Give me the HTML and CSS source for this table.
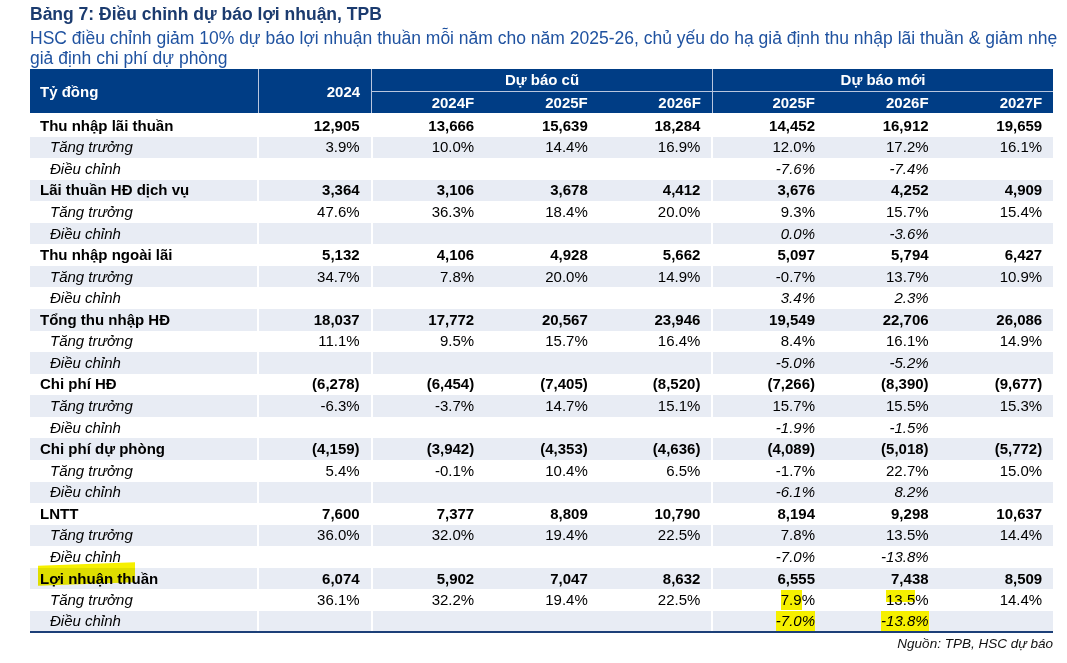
FILE: index.html
```html
<!DOCTYPE html>
<html lang="vi">
<head>
<meta charset="utf-8">
<title>Bảng 7</title>
<link rel="stylesheet" href="styles.css">
</head>
<body>
<div class="page">
  <h1 class="title">Bảng 7: Điều chỉnh dự báo lợi nhuận, TPB</h1>
  <p class="subtitle">HSC điều chỉnh giảm 10% dự báo lợi nhuận thuần mỗi năm cho năm 2025-26, chủ yếu do hạ giả định thu nhập lãi thuần &amp; giảm nhẹ giả định chi phí dự phòng</p>
  <table class="tbl">
    <colgroup>
      <col class="c-label"><col class="c-num"><col class="c-num"><col class="c-num"><col class="c-num"><col class="c-num"><col class="c-num"><col class="c-num">
    </colgroup>
    <thead>
      <tr class="h1">
        <th rowspan="2" class="hl sep">Tỷ đồng</th>
        <th rowspan="2" class="sep">2024</th>
        <th colspan="3" class="grp sep">Dự báo cũ</th>
        <th colspan="3" class="grp">Dự báo mới</th>
      </tr>
      <tr class="h2">
        <th>2024F</th><th>2025F</th><th class="sep">2026F</th>
        <th>2025F</th><th>2026F</th><th>2027F</th>
      </tr>
    </thead>
    <tbody>
      <tr class="main first"><td>Thu nhập lãi thuần</td><td>12,905</td><td>13,666</td><td>15,639</td><td>18,284</td><td>14,452</td><td>16,912</td><td>19,659</td></tr>
      <tr class="sub"><td>Tăng trưởng</td><td>3.9%</td><td>10.0%</td><td>14.4%</td><td>16.9%</td><td>12.0%</td><td>17.2%</td><td>16.1%</td></tr>
      <tr class="adj"><td>Điều chỉnh</td><td></td><td></td><td></td><td></td><td>-7.6%</td><td>-7.4%</td><td></td></tr>

      <tr class="main"><td>Lãi thuần HĐ dịch vụ</td><td>3,364</td><td>3,106</td><td>3,678</td><td>4,412</td><td>3,676</td><td>4,252</td><td>4,909</td></tr>
      <tr class="sub"><td>Tăng trưởng</td><td>47.6%</td><td>36.3%</td><td>18.4%</td><td>20.0%</td><td>9.3%</td><td>15.7%</td><td>15.4%</td></tr>
      <tr class="adj"><td>Điều chỉnh</td><td></td><td></td><td></td><td></td><td>0.0%</td><td>-3.6%</td><td></td></tr>

      <tr class="main"><td>Thu nhập ngoài lãi</td><td>5,132</td><td>4,106</td><td>4,928</td><td>5,662</td><td>5,097</td><td>5,794</td><td>6,427</td></tr>
      <tr class="sub"><td>Tăng trưởng</td><td>34.7%</td><td>7.8%</td><td>20.0%</td><td>14.9%</td><td>-0.7%</td><td>13.7%</td><td>10.9%</td></tr>
      <tr class="adj"><td>Điều chỉnh</td><td></td><td></td><td></td><td></td><td>3.4%</td><td>2.3%</td><td></td></tr>

      <tr class="main"><td>Tổng thu nhập HĐ</td><td>18,037</td><td>17,772</td><td>20,567</td><td>23,946</td><td>19,549</td><td>22,706</td><td>26,086</td></tr>
      <tr class="sub"><td>Tăng trưởng</td><td>11.1%</td><td>9.5%</td><td>15.7%</td><td>16.4%</td><td>8.4%</td><td>16.1%</td><td>14.9%</td></tr>
      <tr class="adj"><td>Điều chỉnh</td><td></td><td></td><td></td><td></td><td>-5.0%</td><td>-5.2%</td><td></td></tr>

      <tr class="main"><td>Chi phí HĐ</td><td>(6,278)</td><td>(6,454)</td><td>(7,405)</td><td>(8,520)</td><td>(7,266)</td><td>(8,390)</td><td>(9,677)</td></tr>
      <tr class="sub"><td>Tăng trưởng</td><td>-6.3%</td><td>-3.7%</td><td>14.7%</td><td>15.1%</td><td>15.7%</td><td>15.5%</td><td>15.3%</td></tr>
      <tr class="adj"><td>Điều chỉnh</td><td></td><td></td><td></td><td></td><td>-1.9%</td><td>-1.5%</td><td></td></tr>

      <tr class="main"><td>Chi phí dự phòng</td><td>(4,159)</td><td>(3,942)</td><td>(4,353)</td><td>(4,636)</td><td>(4,089)</td><td>(5,018)</td><td>(5,772)</td></tr>
      <tr class="sub"><td>Tăng trưởng</td><td>5.4%</td><td>-0.1%</td><td>10.4%</td><td>6.5%</td><td>-1.7%</td><td>22.7%</td><td>15.0%</td></tr>
      <tr class="adj"><td>Điều chỉnh</td><td></td><td></td><td></td><td></td><td>-6.1%</td><td>8.2%</td><td></td></tr>

      <tr class="main"><td>LNTT</td><td>7,600</td><td>7,377</td><td>8,809</td><td>10,790</td><td>8,194</td><td>9,298</td><td>10,637</td></tr>
      <tr class="sub"><td>Tăng trưởng</td><td>36.0%</td><td>32.0%</td><td>19.4%</td><td>22.5%</td><td>7.8%</td><td>13.5%</td><td>14.4%</td></tr>
      <tr class="adj"><td>Điều chỉnh</td><td></td><td></td><td></td><td></td><td>-7.0%</td><td>-13.8%</td><td></td></tr>

      <tr class="main"><td><span class="mark-label">Lợi nhuận th</span>uần</td><td>6,074</td><td>5,902</td><td>7,047</td><td>8,632</td><td>6,555</td><td>7,438</td><td>8,509</td></tr>
      <tr class="sub"><td>Tăng trưởng</td><td>36.1%</td><td>32.2%</td><td>19.4%</td><td>22.5%</td><td><span class="mark">7.9</span>%</td><td><span class="mark mark-top">13.5</span>%</td><td>14.4%</td></tr>
      <tr class="adj last"><td>Điều chỉnh</td><td></td><td></td><td></td><td></td><td><span class="mark">-7.0%</span></td><td><span class="mark">-13.8%</span></td><td></td></tr>
    </tbody>
  </table>
  <p class="source">Nguồn: TPB, HSC dự báo</p>
</div>
</body>
</html>
```

FILE: styles.css
```css
* { box-sizing: border-box; }
html, body { margin: 0; padding: 0; background: #ffffff; }
body { font-family: "Liberation Sans", Arial, sans-serif; color: #000; }

.page {
  width: 1067px;
  padding: 4px 14px 0 30px;
}

.title {
  margin: 0;
  font-size: 17.5px;
  line-height: 21px;
  font-weight: bold;
  color: #1b3b6f;
}

.subtitle {
  margin: 3px -14px 0 0;
  font-size: 17.5px;
  line-height: 20px;
  color: #1f52a0;
}

.tbl {
  width: 1023px;
  border-collapse: collapse;
  table-layout: fixed;
  font-size: 15px;
  margin-top: 1px;
}
.c-label { width: 228px; }
.c-num { width: 113.6px; }

.tbl thead th {
  background: #003d85;
  color: #ffffff;
  font-weight: bold;
  text-align: right;
  padding: 0 11px 0 0;
  height: 22px;
  white-space: nowrap;
}
.tbl thead th.sep { border-right: 1px solid #b9c6de; }
.tbl thead th.hl { text-align: left; padding-left: 10px; }
.tbl thead th.grp { text-align: center; padding: 0; border-bottom: 1px solid #b9c6de; }

.tbl tbody td {
  height: 21.57px;
  padding: 0 11px 0 0;
  text-align: right;
  white-space: nowrap;
  line-height: 18px;
}
.tbl tbody tr.first td { height: 23.5px; padding-top: 2px; }
.tbl tbody td:first-child { text-align: left; padding-left: 10px; border-right: 2px solid #fff; }
.tbl tbody td:nth-child(2),
.tbl tbody td:nth-child(5) { border-right: 2px solid #fff; }
.tbl tbody tr:nth-child(even) td { background: #e8ecf4; }

.tbl tr.main td { font-weight: bold; }
.tbl tr.sub td:first-child,
.tbl tr.adj td:first-child { padding-left: 20px; font-style: italic; }
.tbl tr.adj td { font-style: italic; }
.tbl tr.last td { border-bottom: 2px solid #1c3f78; }
.tbl tr.last td:first-child,
.tbl tr.last td:nth-child(2),
.tbl tr.last td:nth-child(5) { border-right-color: #fff; }

.mark {
  background: #f6f000;
  padding: 1px 0 2px;
}
.mark-top { background: linear-gradient(#f6f000 0 60%, transparent 60%); }

.mark-label { position: relative; }
.mark-label::after {
  content: "";
  position: absolute;
  left: -2px;
  right: -4px;
  top: -6px;
  bottom: 3px;
  background: #f6f000;
  mix-blend-mode: multiply;
  transform: skewY(-2deg);
}

.source {
  margin: 3px 0 0 0;
  text-align: right;
  font-size: 13.5px;
  font-style: italic;
  color: #111;
}
```
